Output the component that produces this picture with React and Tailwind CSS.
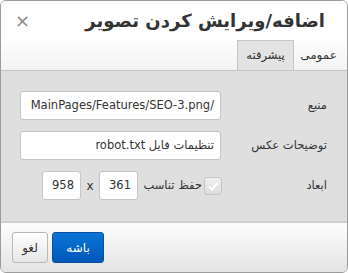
import React from 'react';

const font = { fontFamily: '"DejaVu Sans", "Liberation Sans", sans-serif' };

function Field({ value, className = '' }) {
  return (
    <div
      className={`h-[29px] bg-white border border-[#c5c5c5] rounded-[3px] flex items-center px-[6px] text-[11.5px] text-[#333] whitespace-nowrap overflow-hidden ${className}`}
    >
      {value}
    </div>
  );
}

export default function App() {
  return (
    <div dir="rtl" style={font} className="w-[348px] h-[273px] flex flex-col border border-[#9b9b9b] rounded-[6px] overflow-hidden bg-white text-[#333]">
      {/* Header */}
      <div className="h-[39px] flex items-center justify-between pr-[22px] pl-[14px] bg-white">
        <div className="text-[18px] font-bold text-[#333]">اضافه/ویرایش کردن تصویر</div>
        <div className="text-[18px] text-[#8a8a8a] leading-none">×</div>
      </div>

      {/* Tabs */}
      <div className="h-[31px] flex items-end pr-[4px] bg-gradient-to-b from-[#fdfdfd] to-[#f3f3f3] border-b border-[#c5c5c5]">
        <div className="h-[30px] w-[49px] flex items-center justify-center text-[12px] text-[#333]">عمومی</div>
        <div className="h-[30px] w-[57px] flex items-center justify-center text-[11.5px] text-[#333] bg-[#e3e3e3] border border-b-0 border-[#c5c5c5]">پیشرفته</div>
      </div>

      {/* Body */}
      <div className="flex-1 bg-[#dfdfdf] pt-[20px] pr-[20px] flex flex-col gap-[11px]">
        <div className="flex items-center">
          <div className="w-[106px] text-[11.5px]">منبع</div>
          <Field value="/MainPages/Features/SEO-3.png" className="w-[201px]" />
        </div>
        <div className="flex items-center">
          <div className="w-[106px] text-[11.5px]">توضیحات عکس</div>
          <Field value="تنظیمات فایل robot.txt" className="w-[201px]" />
        </div>
        <div className="flex items-center">
          <div className="w-[105px] text-[11.5px]">ابعاد</div>
          <div className="w-[18px] h-[18px] rounded-[3px] border border-[#c5c5c5] bg-gradient-to-b from-[#f0f0f0] to-[#dcdcdc] flex items-center justify-center">
            <svg width="12" height="12" viewBox="0 0 12 12">
              <path d="M2 6.5 L5 9.5 L10.5 3" fill="none" stroke="#ffffff" strokeWidth="2" />
            </svg>
          </div>
          <div className="text-[11.5px] mr-[2px] w-[64px] whitespace-nowrap">حفظ تناسب</div>
          <Field value="361" className="w-[39px] justify-start" />
          <div className="w-[18px] text-center text-[12px]">x</div>
          <Field value="958" className="w-[39px] justify-start" />
        </div>
      </div>

      {/* Footer */}
      <div className="h-[51px] border-t-2 border-[#d0d0d0] bg-gradient-to-b from-[#fdfdfd] to-[#e4e4e4] flex items-center justify-end gap-[4px] pl-[11px]">
        <div className="h-[31px] w-[52px] rounded-[3px] border border-[#0b4f9a] bg-gradient-to-b from-[#0a74d6] to-[#0457b9] text-white text-[12px] flex items-center justify-center">باشه</div>
        <div className="h-[31px] w-[36px] rounded-[3px] border border-[#b8b8b8] bg-gradient-to-b from-[#ffffff] to-[#e6e6e6] text-[#333] text-[12px] flex items-center justify-center">لغو</div>
      </div>
    </div>
  );
}
